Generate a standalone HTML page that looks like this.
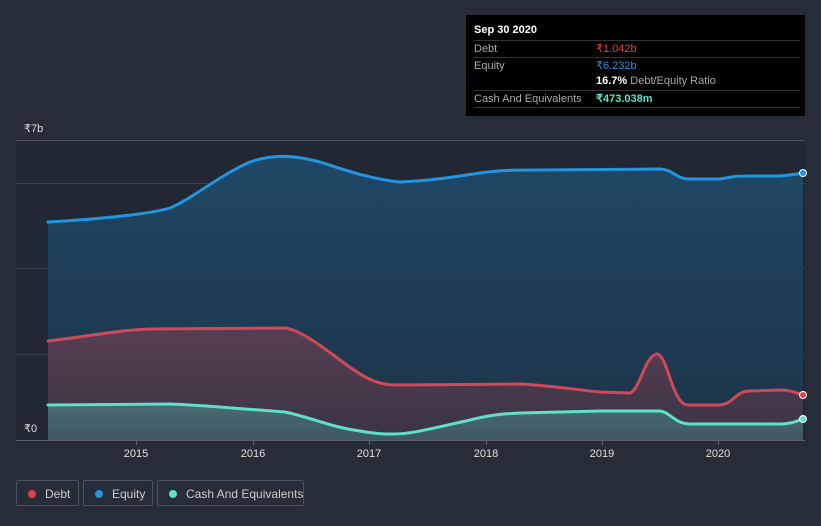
<!DOCTYPE html><html><head><style>
body{margin:0;background:#262d38;font-family:"Liberation Sans",sans-serif;}
.wrap{position:relative;width:821px;height:526px;overflow:hidden;background:#262d38}
.tip{position:absolute;left:466px;top:15px;width:339px;height:101px;background:#000;}
.tip .r{position:absolute;left:8px;width:326px;border-top:1px solid #333;font-size:11px;color:#aaa;height:16px;line-height:16px}
.lg{position:absolute;top:480px;height:26px;border:1px solid #4a525d;border-radius:2px;color:#ccc;font-size:12px;line-height:26px;box-sizing:border-box;white-space:nowrap}
.lg i{position:absolute;left:11px;top:9px;width:8px;height:8px;border-radius:50%}
.lg span{position:absolute;left:28px;white-space:nowrap}
</style></head><body><div class="wrap">
<svg width="821" height="526" style="position:absolute;left:0;top:0">
<defs>
<linearGradient id="ge" x1="0" y1="0" x2="0" y2="1"><stop offset="0" stop-color="#1f4866"/><stop offset="1" stop-color="#1d3348"/></linearGradient>
<linearGradient id="gd" x1="0" y1="0" x2="0" y2="1"><stop offset="0" stop-color="#573f52"/><stop offset="1" stop-color="#3a3444"/></linearGradient>
<linearGradient id="gc" x1="0" y1="0" x2="0" y2="1"><stop offset="0" stop-color="#4a6a70"/><stop offset="1" stop-color="#3f5862"/></linearGradient>
</defs>
<rect x="16" y="140" width="789" height="300" fill="#222833"/>
<g stroke="#3a414c" stroke-width="1">
<line x1="16" y1="140.5" x2="805" y2="140.5" stroke="#4a515c"/>
<line x1="16" y1="183.5" x2="805" y2="183.5"/>
<line x1="16" y1="268.5" x2="805" y2="268.5"/>
<line x1="16" y1="354.5" x2="805" y2="354.5"/>
</g>
<path d="M48,222 C100,219 150,214 170,208 C190,200 220,175 250,162 C270,155 290,154 320,162 C345,170 370,179 400,182 C430,181 460,176 480,173 C500,170 515,170 540,170 L660,169 C675,170 675,179 690,179 L720,179 C730,177 735,176 750,176 L780,176 C795,175 800,173 803,173 L803,440 L48,440Z" fill="url(#ge)"/>
<path d="M48,341 C90,336 120,330 150,329 L285,328 C300,330 320,345 340,360 C360,375 375,385 395,385 L520,384 C545,385 570,389 600,392 L630,393 C640,390 645,355 657,354 C668,355 672,405 688,405 L720,405 C735,403 735,391 750,391 L780,390 C795,390 800,395 803,395 L803,440 L48,440Z" fill="url(#gd)"/>
<path d="M48,405 L170,404 C200,405 230,408 285,412 C310,417 330,427 360,431 C375,434 385,434 395,434 C410,434 430,429 470,420 C490,415 500,414 520,413 L600,411 L660,411 C670,412 675,424 690,424 L780,424 C795,424 800,419 803,419 L803,440 L48,440Z" fill="url(#gc)"/>
<g fill="none" stroke-width="3" stroke-linecap="round">
<path d="M48,222 C100,219 150,214 170,208 C190,200 220,175 250,162 C270,155 290,154 320,162 C345,170 370,179 400,182 C430,181 460,176 480,173 C500,170 515,170 540,170 L660,169 C675,170 675,179 690,179 L720,179 C730,177 735,176 750,176 L780,176 C795,175 800,173 803,173" stroke="#2394df"/>
<path d="M48,341 C90,336 120,330 150,329 L285,328 C300,330 320,345 340,360 C360,375 375,385 395,385 L520,384 C545,385 570,389 600,392 L630,393 C640,390 645,355 657,354 C668,355 672,405 688,405 L720,405 C735,403 735,391 750,391 L780,390 C795,390 800,395 803,395" stroke="#d0495a"/>
<path d="M48,405 L170,404 C200,405 230,408 285,412 C310,417 330,427 360,431 C375,434 385,434 395,434 C410,434 430,429 470,420 C490,415 500,414 520,413 L600,411 L660,411 C670,412 675,424 690,424 L780,424 C795,424 800,419 803,419" stroke="#5fe0c8"/>
</g>
<circle cx="803" cy="173" r="3.5" fill="#2394df" stroke="#fff" stroke-width="1"/>
<circle cx="803" cy="395" r="3.5" fill="#e0404f" stroke="#fff" stroke-width="1"/>
<circle cx="803" cy="419" r="3.5" fill="#5fe0c8" stroke="#fff" stroke-width="1"/>
<line x1="16" y1="440.5" x2="805" y2="440.5" stroke="#5a616c"/>
<g stroke="#5a616c"><line x1="136.5" y1="440" x2="136.5" y2="445"/><line x1="253.5" y1="440" x2="253.5" y2="445"/><line x1="369.5" y1="440" x2="369.5" y2="445"/><line x1="486.5" y1="440" x2="486.5" y2="445"/><line x1="602.5" y1="440" x2="602.5" y2="445"/><line x1="718.5" y1="440" x2="718.5" y2="445"/></g>
<g fill="#e0e0e0" font-size="11" font-family="Liberation Sans,sans-serif" text-anchor="middle">
<text x="136" y="457">2015</text><text x="253" y="457">2016</text><text x="369" y="457">2017</text><text x="486" y="457">2018</text><text x="602" y="457">2019</text><text x="718" y="457">2020</text>
</g>
<text x="24" y="132" fill="#ddd" font-size="11">₹7b</text>
<text x="24" y="432" fill="#ddd" font-size="11">₹0</text>
</svg>
<div class="tip">
<div style="position:absolute;left:8px;top:9px;color:#fff;font-weight:bold;font-size:11px">Sep 30 2020</div>
<div class="r" style="top:25px">Debt<b style="position:absolute;left:122px;color:#e0404f;font-weight:normal">₹1.042b</b></div>
<div class="r" style="top:42px">Equity<b style="position:absolute;left:122px;color:#2394df;font-weight:normal">₹6.232b</b></div>
<div class="r" style="top:58px;border:none"><span style="position:absolute;left:122px"><b style="color:#fff">16.7%</b> Debt/Equity Ratio</span></div>
<div class="r" style="top:75px">Cash And Equivalents<b style="position:absolute;left:122px;color:#5fe0c8">₹473.038m</b></div>
<div style="position:absolute;left:8px;top:92px;width:326px;border-top:1px solid #333"></div>
</div>
<div class="lg" style="left:16px;width:63px"><i style="background:#e0404f"></i><span>Debt</span></div>
<div class="lg" style="left:83px;width:70px"><i style="background:#2394df"></i><span>Equity</span></div>
<div class="lg" style="left:157px;width:147px"><i style="background:#5fe0c8"></i><span>Cash And Equivalents</span></div>
</div></body></html>
